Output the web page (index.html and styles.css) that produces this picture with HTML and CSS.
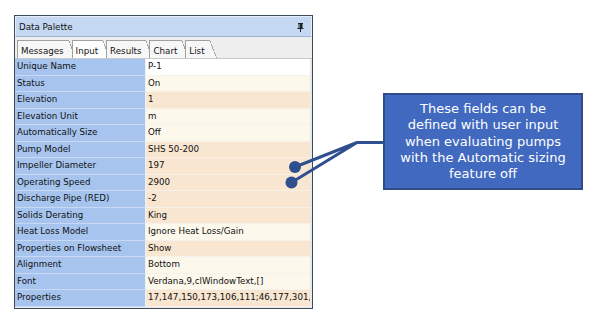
FILE: index.html
```html
<!DOCTYPE html>
<html>
<head>
<meta charset="utf-8">
<link rel="stylesheet" href="styles.css">
</head>
<body>
<div class="page">
  <div class="panel">
    <div class="title">
      <span>Data Palette</span>
      <svg class="pin" width="7" height="9" viewBox="0 0 7 9">
        <path d="M1 0.5H6M2 0.5V5M5 0.5V5M0.5 5.5H6.5M3.5 5.5V9" stroke="#222" stroke-width="1" fill="none"/>
        <rect x="3" y="1" width="2" height="4" fill="#222"/>
      </svg>
    </div>
    <div class="tabs">
      <div class="tab">Messages</div>
      <div class="tab active">Input</div>
      <div class="tab">Results</div>
      <div class="tab">Chart</div>
      <div class="tab">List</div>
    </div>
    <div class="grid">
      <div class="k">Unique Name</div><div class="v white">P-1</div>
      <div class="k">Status</div><div class="v cream">On</div>
      <div class="k">Elevation</div><div class="v peach">1</div>
      <div class="k">Elevation Unit</div><div class="v cream">m</div>
      <div class="k">Automatically Size</div><div class="v cream">Off</div>
      <div class="k">Pump Model</div><div class="v peach">SHS 50-200</div>
      <div class="k">Impeller Diameter</div><div class="v peach">197</div>
      <div class="k">Operating Speed</div><div class="v peach">2900</div>
      <div class="k">Discharge Pipe (RED)</div><div class="v peach">-2</div>
      <div class="k">Solids Derating</div><div class="v peach">King</div>
      <div class="k">Heat Loss Model</div><div class="v cream">Ignore Heat Loss/Gain</div>
      <div class="k">Properties on Flowsheet</div><div class="v peach">Show</div>
      <div class="k">Alignment</div><div class="v cream">Bottom</div>
      <div class="k">Font</div><div class="v cream">Verdana,9,clWindowText,[]</div>
      <div class="k">Properties</div><div class="v peach">17,147,150,173,106,111;46,177,301,</div>
    </div>
  </div>
  <div class="callout">These fields can be<br>defined with user input<br>when evaluating pumps<br>with the Automatic sizing<br>feature off</div>
  <svg class="connector" width="599" height="316" viewBox="0 0 599 316">
    <path d="M384 142.5H357L295 167M357 142.5L291.5 182.5" stroke="#2f4f8f" stroke-width="3" fill="none" stroke-linejoin="round"/>
    <circle cx="295" cy="167" r="6" fill="#2f4f8f"/>
    <circle cx="291.5" cy="182.5" r="6" fill="#2f4f8f"/>
  </svg>
</div>
</body>
</html>
```
FILE: styles.css
```css
html, body {
  margin: 0;
  padding: 0;
  background: #ffffff;
}
.page {
  position: relative;
  width: 599px;
  height: 316px;
  display: flex;
  align-items: flex-start;
  font-family: "DejaVu Sans", Verdana, sans-serif;
}
.panel {
  margin-left: 14px;
  margin-top: 15px;
  width: 299px;
  box-sizing: border-box;
  border: 1px solid #3f4b5a;
  background: #f0f0f0;
  font-size: 8.7px;
  color: #111;
}
.title {
  height: 21px;
  box-sizing: border-box;
  background: #c4d8f2;
  border: 1px solid #e6eefa;
  border-bottom-color: #9fb4cf;
  display: flex;
  align-items: center;
  justify-content: space-between;
  padding: 1px 7px 0 3px;
}
.pin {
  display: block;
}
.tabs {
  height: 22px;
  box-sizing: border-box;
  display: flex;
  align-items: flex-end;
  padding-left: 2px;
  background: #eeeeee;
  border-bottom: 1px solid #c9c9c9;
}
.tab {
  position: relative;
  height: 18px;
  box-sizing: border-box;
  padding: 3px 5px 0 3px;
  margin-right: 3px;
  background: #f7f7f7;
  border-top: 1px solid #a0a0a0;
  border-left: 1px solid #a0a0a0;
  line-height: 14px;
}
.tab::after {
  content: "";
  position: absolute;
  top: -1px;
  right: -7px;
  width: 7px;
  height: 18px;
  background: linear-gradient(to top right, #f7f7f7 0 calc(50% - 0.8px), #a0a0a0 calc(50% - 0.8px) 50%, transparent 50%);
}
.tab.active {
  background: #ffffff;
}
.tab.active::after {
  background: linear-gradient(to top right, #ffffff 0 calc(50% - 0.8px), #a0a0a0 calc(50% - 0.8px) 50%, transparent 50%);
}
.grid {
  display: grid;
  grid-template-columns: 131px 1fr;
  background: #ffffff;
  border-right: 2px solid #e8e8e8;
  border-bottom: 1px solid #e8e8e8;
}
.k, .v {
  height: 16.5px;
  box-sizing: border-box;
  line-height: 15.5px;
  border-bottom: 1px solid #e9eef6;
  white-space: nowrap;
  overflow: hidden;
}
.k {
  background: #a6c4ee;
  padding-left: 2px;
  border-bottom-color: #c8daf3;
  border-right: 1px solid #eef3fa;
}
.v {
  padding-left: 2px;
  border-bottom-color: #f6f1ea;
}
.white { background: #ffffff; }
.cream { background: #fdf8ec; }
.peach { background: #f8e6d1; }
.callout {
  margin-left: 70px;
  margin-top: 93px;
  width: 200px;
  height: 97px;
  box-sizing: border-box;
  border: 2px solid #2f4b88;
  background: #4169c0;
  color: #ffffff;
  font-size: 13px;
  line-height: 16.3px;
  text-align: center;
  padding: 6px 0 0 0;
  white-space: nowrap;
}
.connector {
  position: absolute;
  left: 0;
  top: 0;
  pointer-events: none;
}
```
